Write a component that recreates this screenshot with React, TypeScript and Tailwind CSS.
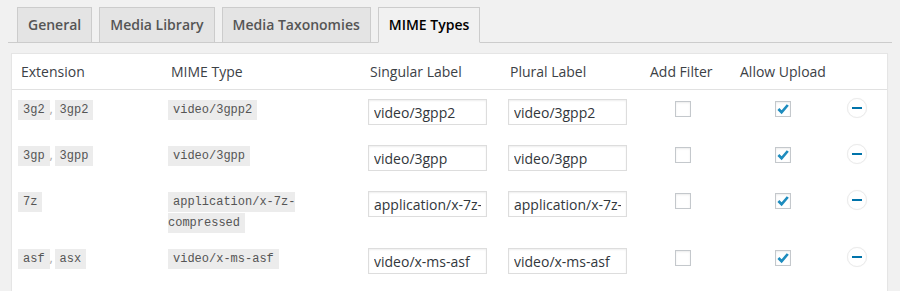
import React from "react";

type Row = { ext: string[]; mime: React.ReactNode; label: string; filter: boolean; allow: boolean };

const rows: Row[] = [
  { ext: ["3g2", "3gp2"], mime: "video/3gpp2", label: "video/3gpp2", filter: false, allow: true },
  { ext: ["3gp", "3gpp"], mime: "video/3gpp", label: "video/3gpp", filter: false, allow: true },
  {
    ext: ["7z"],
    mime: (
      <>
        application/x-7z-
        <br />
        compressed
      </>
    ),
    label: "application/x-7z-compressed",
    filter: false,
    allow: true,
  },
  { ext: ["asf", "asx"], mime: "video/x-ms-asf", label: "video/x-ms-asf", filter: false, allow: true },
  { ext: ["avi"], mime: "video/avi", label: "video/avi", filter: false, allow: true },
];

const GRID = "grid grid-cols-[149px_199px_140px_140px_90px_100px_1fr]";

function Code({ children }: { children: React.ReactNode }) {
  return (
    <code
      className="bg-[#ececec] text-[#555] pl-[5px] pr-[5px] pt-[3px] pb-[3px] text-[12px]"
      style={{ fontFamily: '"Liberation Mono", "DejaVu Sans Mono", monospace' }}
    >
      {children}
    </code>
  );
}

function Checkbox({ checked }: { checked: boolean }) {
  return (
    <div className="w-[16px] h-[16px] border border-[#c4c8cc] bg-white shadow-[inset_0_1px_2px_rgba(0,0,0,0.08)] flex items-center justify-center">
      {checked && (
        <svg width="14" height="14" viewBox="0 0 14 14">
          <path d="M2.4 7 L5.6 10.3 L11.8 3" fill="none" stroke="#1e8cbe" strokeWidth="2.7" strokeLinecap="butt" strokeLinejoin="miter" />
        </svg>
      )}
    </div>
  );
}

function Tab({ label, active, first }: { label: string; active?: boolean; first?: boolean }) {
  return (
    <div
      className={
        "border border-[#ccc] px-[10px] py-[5px] text-[14px] font-semibold leading-[24px] -mb-px " +
        (first ? "ml-[9px] " : "ml-[7px] ") +
        (active ? "bg-[#f1f1f1] border-b-[#f1f1f1] text-[#000]" : "bg-[#e4e4e4] text-[#555]")
      }
    >
      {label}
    </div>
  );
}

export default function App() {
  return (
    <div
      className="w-[900px] h-[291px] overflow-hidden bg-[#f1f1f1] text-[#3c4146]"
      style={{ fontFamily: '"Open Sans", "Noto Sans", sans-serif' }}
    >
      <div className="mx-[8px] pt-[7px] flex border-b border-[#ccc]">
        <Tab label="General" first />
        <Tab label="Media Library" />
        <Tab label="Media Taxonomies" />
        <Tab label="MIME Types" active />
      </div>

      <div className="ml-[11px] w-[877px] mt-[10px] bg-white border border-[#e5e5e5] shadow-[0_1px_1px_rgba(0,0,0,0.04)]">
        <div className={GRID + " h-[36px] border-b border-[#e1e1e1] text-[14px] leading-[20px]"}>
          <div className="pl-[9px] pt-[8px]">Extension</div>
          <div className="pl-[10px] pt-[8px]">MIME Type</div>
          <div className="pl-[10px] pt-[8px]">Singular Label</div>
          <div className="pl-[10px] pt-[8px]">Plural Label</div>
          <div className="pl-[10px] pt-[8px]">Add Filter</div>
          <div className="pl-[10px] pt-[8px]">Allow Upload</div>
          <div />
        </div>

        {rows.map((r, i) => (
          <div key={i} className={GRID + " min-h-[46px] items-start"}>
            <div className="pl-[6px] pt-[8px] pb-[7px] leading-[18px]">
              {r.ext.map((e, j) => (
                <React.Fragment key={j}>
                  {j > 0 && <span className="inline-block w-[5px] text-[13px] text-[#aaa]">,</span>}
                  <Code>{e}</Code>
                </React.Fragment>
              ))}
            </div>
            <div className="pl-[7px] pr-[10px] pt-[8px] pb-[7px] leading-[18px]">
              <Code>{r.mime}</Code>
            </div>
            <div className="pl-[8px] pt-[9px]">
              <input
                readOnly
                value={r.label}
                className="block w-[119px] h-[26px] border border-[#ddd] px-[5px] text-[14px] text-[#32373c] bg-white shadow-[inset_0_1px_2px_rgba(0,0,0,0.07)] outline-none"
                style={{ fontFamily: '"Open Sans", "Noto Sans", sans-serif' }}
              />
            </div>
            <div className="pl-[8px] pt-[9px]">
              <input
                readOnly
                value={r.label}
                className="block w-[119px] h-[26px] border border-[#ddd] px-[5px] text-[14px] text-[#32373c] bg-white shadow-[inset_0_1px_2px_rgba(0,0,0,0.07)] outline-none"
                style={{ fontFamily: '"Open Sans", "Noto Sans", sans-serif' }}
              />
            </div>
            <div className="pl-[35px] pt-[11px]">
              <Checkbox checked={r.filter} />
            </div>
            <div className="pl-[45px] pt-[11px]">
              <Checkbox checked={r.allow} />
            </div>
            <div className="pl-[17px] pt-[8px]">
              <div className="w-[20px] h-[20px] rounded-full bg-white border border-[#ececec] shadow-[0_0_1px_rgba(0,0,0,0.08)] flex items-center justify-center">
                <div className="w-[10px] h-[2px] bg-[#0073aa]" />
              </div>
            </div>
          </div>
        ))}
      </div>
    </div>
  );
}
